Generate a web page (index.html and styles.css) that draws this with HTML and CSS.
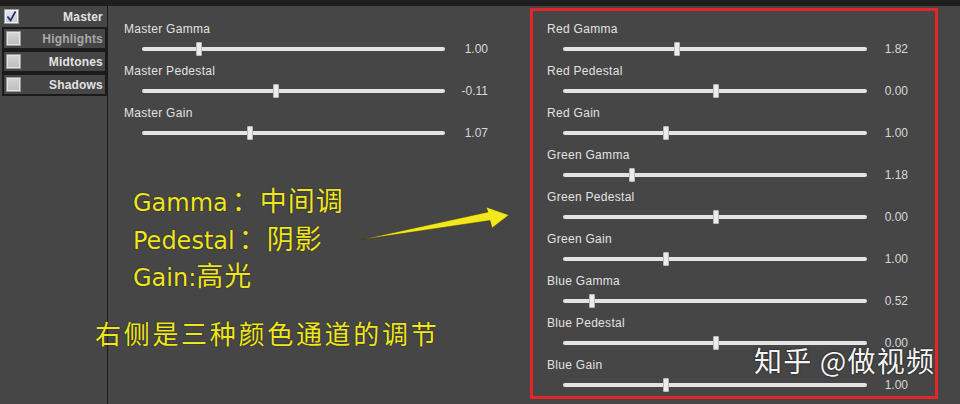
FILE: index.html
```html
<!DOCTYPE html>
<html lang="zh">
<head>
<meta charset="utf-8">
<title>Color Correction</title>
<link rel="stylesheet" href="styles.css">
</head>
<body>
<div class="screen">
  <div class="topbar"></div>
  <div class="main">
    <aside class="sidebar">
      <div class="opt opt-master">
        <span class="cb cb-on"><svg viewBox="0 0 15 15" width="15" height="15"><path d="M3.5 7.5 L6.5 11.5 L11.5 2.5" fill="none" stroke="#1c2a55" stroke-width="1.6"/></svg></span>
        <span class="opt-label">Master</span>
      </div>
      <div class="opt opt-framed">
        <span class="cb"></span>
        <span class="opt-label dim">Highlights</span>
      </div>
      <div class="opt opt-framed">
        <span class="cb"></span>
        <span class="opt-label">Midtones</span>
      </div>
      <div class="opt opt-framed">
        <span class="cb"></span>
        <span class="opt-label">Shadows</span>
      </div>
    </aside>

    <section class="master-panel">
      <div class="slider">
        <div class="s-label">Master Gamma</div>
        <div class="s-row"><div class="track"><span class="thumb" style="left:18.8%"></span></div><span class="s-val">1.00</span></div>
      </div>
      <div class="slider">
        <div class="s-label">Master Pedestal</div>
        <div class="s-row"><div class="track"><span class="thumb" style="left:44.2%"></span></div><span class="s-val">-0.11</span></div>
      </div>
      <div class="slider">
        <div class="s-label">Master Gain</div>
        <div class="s-row"><div class="track"><span class="thumb" style="left:35.6%"></span></div><span class="s-val">1.07</span></div>
      </div>
    </section>

    <section class="rgb-box">
      <div class="slider">
        <div class="s-label">Red Gamma</div>
        <div class="s-row"><div class="track"><span class="thumb" style="left:37.5%"></span></div><span class="s-val">1.82</span></div>
      </div>
      <div class="slider">
        <div class="s-label">Red Pedestal</div>
        <div class="s-row"><div class="track"><span class="thumb" style="left:50.3%"></span></div><span class="s-val">0.00</span></div>
      </div>
      <div class="slider">
        <div class="s-label">Red Gain</div>
        <div class="s-row"><div class="track"><span class="thumb" style="left:33.9%"></span></div><span class="s-val">1.00</span></div>
      </div>
      <div class="slider">
        <div class="s-label">Green Gamma</div>
        <div class="s-row"><div class="track"><span class="thumb" style="left:22.7%"></span></div><span class="s-val">1.18</span></div>
      </div>
      <div class="slider">
        <div class="s-label">Green Pedestal</div>
        <div class="s-row"><div class="track"><span class="thumb" style="left:50.3%"></span></div><span class="s-val">0.00</span></div>
      </div>
      <div class="slider">
        <div class="s-label">Green Gain</div>
        <div class="s-row"><div class="track"><span class="thumb" style="left:33.9%"></span></div><span class="s-val">1.00</span></div>
      </div>
      <div class="slider">
        <div class="s-label">Blue Gamma</div>
        <div class="s-row"><div class="track"><span class="thumb" style="left:9.5%"></span></div><span class="s-val">0.52</span></div>
      </div>
      <div class="slider">
        <div class="s-label">Blue Pedestal</div>
        <div class="s-row"><div class="track"><span class="thumb" style="left:50.3%"></span></div><span class="s-val">0.00</span></div>
      </div>
      <div class="slider">
        <div class="s-label">Blue Gain</div>
        <div class="s-row"><div class="track"><span class="thumb" style="left:33.9%"></span></div><span class="s-val">1.00</span></div>
      </div>
    </section>
  </div>

  <div class="notes">
    <div class="note-line"><span class="en">Gamma</span><span class="zh">：中间调</span></div>
    <div class="note-line"><span class="en">Pedestal</span><span class="zh">：阴影</span></div>
    <div class="note-line"><span class="en">Gain:</span><span class="zh tight">高光</span></div>
  </div>
  <div class="note-bottom">右侧是三种颜色通道的调节</div>

  <svg class="arrow" width="960" height="404" viewBox="0 0 960 404">
    <polygon points="362,239.5 488,212 486,207 509,215 492,228 490,220.5" fill="#f2e81c" stroke="#3a3a10" stroke-width="0.5"/>
  </svg>

  <div class="watermark">知乎 @做视频</div>
</div>
</body>
</html>
```

FILE: styles.css
```css
* { box-sizing: border-box; }

html, body {
  margin: 0;
  padding: 0;
}

body {
  width: 960px;
  height: 404px;
  overflow: hidden;
  background: #464646;
  font-family: "Liberation Sans", Arial, sans-serif;
}

.screen {
  position: relative;
  width: 960px;
  height: 404px;
  background: #464646;
}

.topbar {
  height: 6px;
  background: #1e1e1e;
}

.main {
  display: flex;
  height: 398px;
}

/* ---------- sidebar ---------- */
.sidebar {
  width: 108px;
  flex: none;
  border-right: 1px solid #1c1c1c;
  padding-top: 3px;
}

.opt {
  display: flex;
  align-items: center;
  justify-content: space-between;
}

.opt-master {
  height: 15px;
  padding: 0 4px 0 4px;
  margin-bottom: 3px;
}

.opt-framed {
  height: 23px;
  margin-left: 2px;
  border: 2px solid #1b1b1b;
  padding: 0 2px 0 2px;
}

.cb {
  width: 15px;
  height: 15px;
  flex: none;
  border: 1px solid #9a9a9a;
  background: linear-gradient(#d4d4d4, #bcbcbc);
  box-shadow: inset 0 0 0 1px #e4e4e4;
}

.cb-on {
  background: linear-gradient(#e4e6f2, #c4c8dc);
  box-shadow: inset 0 0 0 1px #f2f2f8;
}

.cb svg { display: block; margin: -1px 0 0 -1px; }

.opt-label {
  font-size: 12px;
  font-weight: bold;
  color: #e2e2e2;
  letter-spacing: 0.2px;
}

.opt-label.dim { color: #a8a8a8; }

/* ---------- sliders ---------- */
.master-panel {
  flex: 1;
  padding: 16px 0 0 16px;
}

.slider {
  height: 42px;
}

.s-label {
  height: 14px;
  line-height: 14px;
  font-size: 12px;
  letter-spacing: 0.3px;
  color: #e2e2e2;
  white-space: nowrap;
}

.s-row {
  display: flex;
  align-items: center;
  height: 24px;
  padding-left: 18px;
  padding-top: 1px;
}

.track {
  position: relative;
  width: 303px;
  height: 4px;
  border-radius: 2px;
  background: #e4e4e4;
}

.thumb {
  position: absolute;
  top: -5px;
  width: 6px;
  height: 14px;
  transform: translateX(-50%);
  background: #ececec;
  border: 1px solid #b8b8b8;
  border-radius: 1px;
}

.s-val {
  width: 43px;
  text-align: right;
  font-size: 12px;
  color: #d8d8d8;
}

.rgb-box {
  width: 408px;
  height: 391px;
  flex: none;
  margin: 2px 22px 0 0;
  border: 3px solid #e3262a;
  padding: 11px 0 0 14px;
}

.rgb-box .s-row { padding-left: 16px; }
.rgb-box .track { width: 304px; }
.rgb-box .s-val { width: 41px; }

/* ---------- annotations (overlay) ---------- */
.notes {
  position: absolute;
  left: 133px;
  top: 181px;
  color: #f0e61e;
  text-shadow: 0 0 1px #222, 0 0 1px #222;
}

.note-line {
  height: 37.5px;
  line-height: 37.5px;
  white-space: nowrap;
}

.en {
  font-family: "DejaVu Sans", Verdana, sans-serif;
  font-size: 24px;
}

.zh {
  font-family: "Noto Sans CJK SC", sans-serif;
  font-size: 27px;
  letter-spacing: 1px;
  margin-left: 4px;
}

.zh.tight { margin-left: 0; }

.note-bottom {
  position: absolute;
  left: 95px;
  top: 316px;
  font-family: "Noto Sans CJK SC", sans-serif;
  font-size: 26px;
  line-height: 34px;
  letter-spacing: 2.7px;
  color: #f0e61e;
  text-shadow: 0 0 1px #222, 0 0 1px #222;
  white-space: nowrap;
}

.arrow {
  position: absolute;
  left: 0;
  top: 0;
}

.watermark {
  position: absolute;
  left: 754px;
  top: 343px;
  font-family: "Noto Sans CJK SC", sans-serif;
  font-weight: 400;
  font-size: 28px;
  line-height: 34px;
  letter-spacing: 1.2px;
  color: #f4f4f4;
  text-shadow: 0 0 2px #1a1a1a, 0 0 1px #1a1a1a;
  white-space: nowrap;
}
```
